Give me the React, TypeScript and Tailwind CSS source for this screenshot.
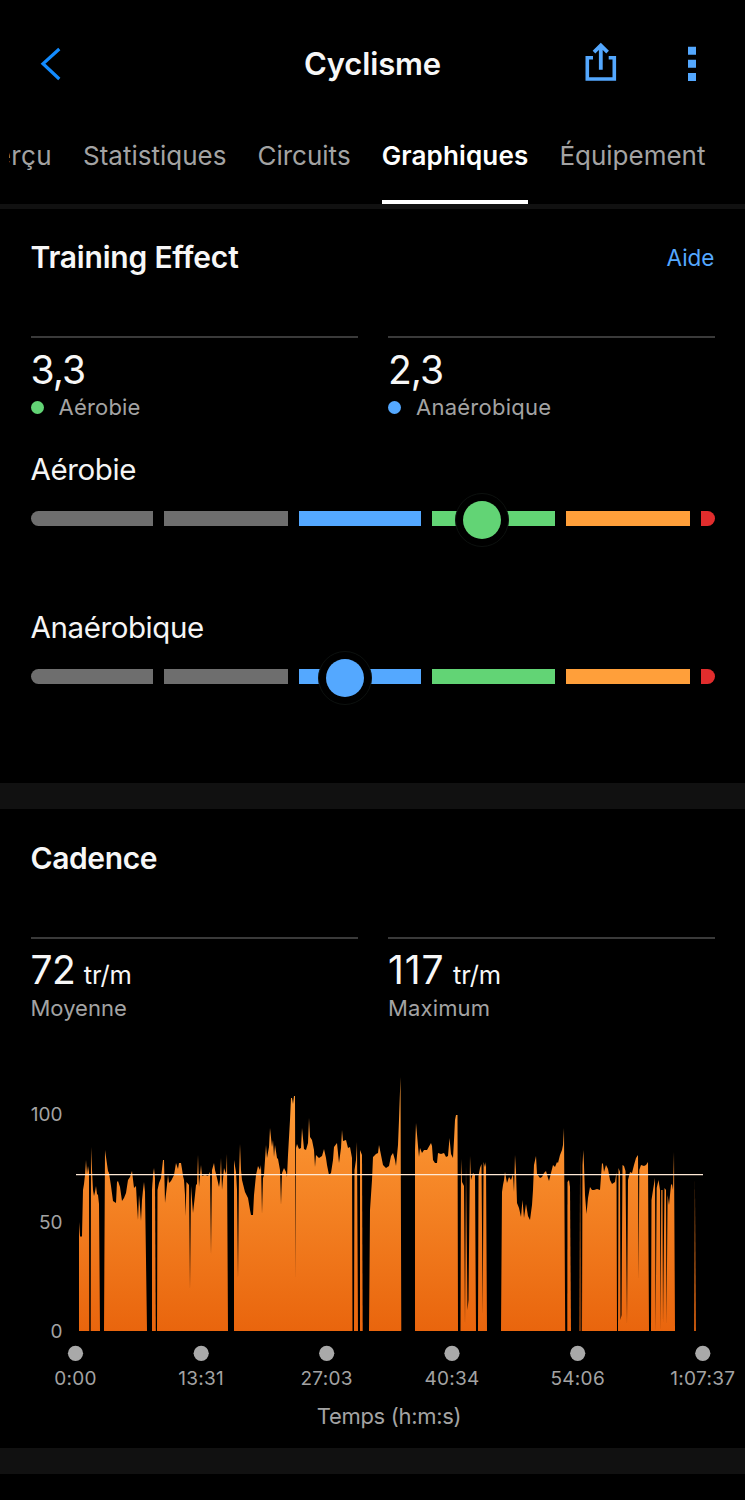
import React from "react";

const CADENCE = [
  "79,1331 79,1222 80,1236 81,1237 82,1236 83,1190 84,1184 85,1175 86,1160 87,1174 88,1166 89,1172 89.3,1331",
  "90.7,1331 91,1147 92,1170 93,1190 94,1196 95,1192 96,1186 97,1194 98,1195 99,1204 100,1331",
  "104,1331 105,1150 106,1157 108,1171 109,1173 111,1186 113,1201 116,1203 117,1182 118,1181 120,1187 122,1201 124,1198 126,1193 128,1180 130,1177 132,1171 134,1188 136,1186 137,1205 138,1220 139,1195 140,1207 141,1221 142,1200 143,1190 144,1182 145,1192 146,1260 147,1331",
  "152,1331 152,1190 153,1175 154,1168 155,1178 155.8,1331",
  "157,1331 157.5,1190 159,1183 161,1178 163,1160 164,1160 165,1203 167,1185 168,1175 169,1183 171,1181 174,1175 176,1163 178,1169 179,1163 181,1163 182,1169 183,1176 184,1180 185,1195 185.6,1216 186.5,1182 189,1185 190,1290 191,1186 193,1213 195,1195 196,1185 197,1184 198,1155 199,1187 201,1165 202,1176 205,1175 208,1176 210,1172 211,1255 212,1170 214,1163 215,1170 217,1178 219,1187 220,1180 221,1158 222,1190 224,1168 226,1174 227,1154 228,1331",
  "234,1331 234,1160 236,1172 237,1190 238,1279 239,1175 240,1144 241,1170 242,1180 245,1192 248,1198 250,1210 251,1215 253,1215 254,1195 256,1175 258,1166 260,1170 261,1165 262,1214 263,1178 264,1175 266,1145 267,1158 269,1147 270,1128 272,1147 273,1140 274,1157 275,1145 277,1158 278,1159 280,1170 281,1205 282,1173 284,1168 286,1172 287,1177 288,1155 290,1120 291,1098 292,1098 293,1104 294,1096 295,1096 295.5,1280 296,1148 297,1144 299,1149 301,1148 302,1128 304,1149 306,1150 308,1143 309,1118 310,1137 312,1140 314,1150 315,1167 316,1155 319,1158 322,1156 324,1149 326,1158 327,1165 329,1175 331,1173 333,1160 334,1147 337,1143 339,1163 341,1148 342,1130 343,1141 346,1140 348,1148 350,1147 352,1158 352.5,1331",
  "354,1331 354.5,1170 356,1160 357,1142 358,1331",
  "360,1331 360,1150 362,1155 362.7,1331",
  "369,1331 370,1210 372,1180 373,1157 376,1154 378,1153 379,1145 381,1155 383,1165 386,1168 389,1166 391,1156 393,1153 395,1160 396,1166 398,1145 399,1120 400.5,1077 401.3,1331",
  "415,1331 415,1150 416,1123 418,1146 419,1157 420,1148 422,1153 424,1150 427,1150 431,1143 432,1146 433,1160 435,1163 437,1163 438,1153 441,1154 444,1153 446,1157 448,1156 449.5,1138 451,1154 453,1158 454,1140 455,1120 456,1115 457.5,1115 458,1331",
  "460.5,1331 461,1159 462,1182 464,1186 465,1325 466,1166 467.5,1310 468.5,1300 470,1156 471,1180 473,1173 475,1175 476,1331",
  "478,1331 478.5,1176 480,1168 481.5,1164 482.7,1315 483.6,1162 485,1167 486,1162 487,1331",
  "501,1331 502,1192 503,1185 504,1180 505,1172 507,1183 509,1177 511,1180 513,1174 514,1192 515,1155 516,1172 517,1203 519,1208 521,1217 522.5,1200 524,1218 526,1204 528,1216 530,1220 532,1205 533,1190 534,1165 536,1156 537,1174 540,1178 542,1177 544,1173 546,1171 548,1178 549,1181 551,1173 553,1165 555,1167 557,1162 558,1163 560,1155 562,1150 563,1145 564,1128 565.2,1331",
  "567.3,1331 567.5,1182 569,1180 570,1187 571,1331",
  "582,1331 582.5,1165 583.3,1150 584,1165 585,1195 586.5,1214 588,1198 590,1187 592,1190 594,1190 597,1189 600,1190 602,1163 603,1164 604,1172 606,1165 608,1169 610,1180 612,1184 615,1182 616.5,1172 617,1331",
  "618,1331 618.5,1168 620,1172 620.5,1320 621.5,1315 622.5,1165 624,1166 625.5,1171 627,1325 628,1180 630,1172 632,1173 634,1165 636,1158 638,1155 638.6,1280 639.3,1170 641,1165 644,1166 646,1165 648,1162 649,1331",
  "651,1331 651.5,1200 653,1190 655,1178 655.6,1331 656.7,1188 658.5,1180 660,1190 660.5,1331 661.3,1190 662.5,1190 663,1325 664.5,1188 666,1190 666.5,1325 667.6,1195 669,1205 671,1185 672,1184 673,1190 674,1152 675,1331",
];

const TIMES = [
  { x: 75.5, label: "0:00" },
  { x: 201.2, label: "13:31" },
  { x: 326.7, label: "27:03" },
  { x: 452, label: "40:34" },
  { x: 577.7, label: "54:06" },
  { x: 702.8, label: "1:07:37" },
];

function CadenceChart() {
  return (
    <svg className="block h-[390px] w-[745px]" viewBox="0 1050 745 390">
      <defs>
        <linearGradient id="cadence" gradientUnits="userSpaceOnUse" x1="0" y1="1077" x2="0" y2="1331">
          <stop offset="0" stopColor="#ff9f3a" />
          <stop offset="0.4" stopColor="#f68828" />
          <stop offset="1" stopColor="#e9650d" />
        </linearGradient>
      </defs>
      <g fill="url(#cadence)">
        {CADENCE.map((points) => (
          <polygon key={points} points={points} />
        ))}
        <polygon points="579,1331 580.2,1150 581.5,1331" opacity="0.5" />
        <polygon points="694,1331 694.9,1180 696,1331" opacity="0.85" />
      </g>
      <path d="M76 1174.7H703" stroke="#ffe9d5" strokeWidth="1.3" />
      <g fill="#a3a3a3" fontSize="19">
        <text x="62.5" y="1120.5" textAnchor="end">100</text>
        <text x="62.5" y="1228.5" textAnchor="end">50</text>
        <text x="62.5" y="1337.5" textAnchor="end">0</text>
        {TIMES.map((t) => (
          <g key={t.label}>
            <circle cx={t.x} cy="1353.3" r="7.6" fill="#a9a9a9" />
            <text x={t.x} y="1384.5" textAnchor="middle" letterSpacing="0.3">{t.label}</text>
          </g>
        ))}
        <text x="389" y="1424" textAnchor="middle" fontSize="22" letterSpacing="-0.3">Temps (h:m:s)</text>
      </g>
    </svg>
  );
}

function Gauge({ label, dot, knob }: { label: string; dot: string; knob: string }) {
  return (
    <div className="h-[158px]">
      <div className="h-[61px] text-[29.5px] leading-[38px] tracking-[-0.4px] text-[#f5f5f5]">{label}</div>
      <div className="relative flex h-[15px] gap-[11px]">
        <div className="w-[123px] rounded-l-full bg-[#6e6e6e]" />
        <div className="w-[123.5px] bg-[#6e6e6e]" />
        <div className="w-[123px] bg-[#54a8ff]" />
        <div className="w-[123px] bg-[#62d475]" />
        <div className="w-[123.5px] bg-[#ff9f3a]" />
        <div className="w-[14px] rounded-r-full bg-[#e12d2d]" />
        <div className={`absolute top-[-18px] flex size-[54px] items-center justify-center rounded-full border border-[#0d110f] bg-black ${knob}`}>
          <div className={`size-[38px] rounded-full ${dot}`} />
        </div>
      </div>
    </div>
  );
}

export default function App() {
  return (
    <div className="h-[1500px] w-[745px] overflow-hidden bg-black font-['Inter',sans-serif] text-[#f7f7f7]">
      <header className="flex h-[128px] items-center">
        <svg className="h-[40px] w-[75px]" viewBox="0 44 75 40" fill="none">
          <path d="M59.3 49L43 63.7L59.3 79" stroke="#138cff" strokeWidth="3.2" />
        </svg>
        <h1 className="w-[595px] text-center text-[31px] leading-[40px] font-semibold tracking-[-0.15px]">Cyclisme</h1>
        <svg className="-ml-[100px] h-[44px] w-[175px]" viewBox="570 42 175 44" fill="none">
          <path d="M593 57.7H587.3V79H614.3V57.7H608.7" stroke="#54a8ff" strokeWidth="3.6" />
          <path d="M600.8 69.7V47M594 52.2L600.8 45.5L607.6 52.2" stroke="#54a8ff" strokeWidth="3.8" />
          <path d="M688 46.7h8v8h-8zM688 59.8h8v8h-8zM688 73h8v8h-8z" fill="#54a8ff" />
        </svg>
      </header>

      <nav className="ml-[9px] flex h-[76px] justify-between overflow-hidden pr-[39.5px] text-[26px] leading-[56px] text-[#a3a3a3]">
        <div className="flex w-[43px] shrink-0 justify-end overflow-hidden tracking-[0.4px]">Aperçu</div>
        <div>Statistiques</div>
        <div>Circuits</div>
        <div className="border-b-4 border-white font-semibold tracking-[0.15px] text-white">Graphiques</div>
        <div>Équipement</div>
      </nav>
      <div className="h-[5px] bg-[#111111]" />

      <section className="h-[574px] pr-[30.5px] pl-[30.5px]">
        <div className="flex h-[127px] items-start justify-between pt-[28px]">
          <h2 className="text-[30px] leading-[40px] font-semibold tracking-[-0.2px]">Training Effect</h2>
          <a className="pt-px text-[22.5px] leading-[40px] text-[#54a8ff]">Aide</a>
        </div>
        <div className="flex gap-[30px]">
          <div className="h-[105px] w-[328px] border-t-2 border-[#3a3a3a]">
            <div className="pt-[10px] text-[39px] leading-[44px] tracking-[-1px]">3,3</div>
            <div className="flex items-center gap-[15px] text-[22px] leading-[30px] tracking-[0.2px] text-[#a3a3a3]"><span className="size-[13px] rounded-full bg-[#62d475]" />Aérobie</div>
          </div>
          <div className="h-[105px] w-[327px] border-t-2 border-[#3a3a3a]">
            <div className="pt-[10px] text-[39px] leading-[44px] tracking-[-1px]">2,3</div>
            <div className="flex items-center gap-[15px] text-[22px] leading-[30px] tracking-[0.25px] text-[#a3a3a3]"><span className="size-[13px] rounded-full bg-[#54a8ff]" />Anaérobique</div>
          </div>
        </div>
        <div className="pt-[9px]">
          <Gauge label="Aérobie" dot="bg-[#62d475]" knob="left-[424.5px]" />
          <Gauge label="Anaérobique" dot="bg-[#54a8ff]" knob="left-[287.5px]" />
        </div>
      </section>

      <div className="h-[26px] bg-[#111111]" />

      <section className="h-[639px]">
        <div className="h-[128px] px-[30.5px] pt-[29px]">
          <h2 className="text-[30px] leading-[40px] font-semibold tracking-[-0.4px]">Cadence</h2>
        </div>
        <div className="flex h-[113px] gap-[30px] px-[30.5px]">
          <div className="w-[328px] border-t-2 border-[#3a3a3a]">
            <div className="flex h-[54px] items-baseline gap-[8.5px] pt-[9px] text-[39px] leading-[44px]"><span className="tracking-[-0.5px]">72</span><span className="text-[25.5px] tracking-[-0.2px]">tr/m</span></div>
            <div className="text-[22px] leading-[30px] text-[#a3a3a3]">Moyenne</div>
          </div>
          <div className="w-[327px] border-t-2 border-[#3a3a3a]">
            <div className="flex h-[54px] items-baseline gap-[8.5px] pt-[9px] text-[39px] leading-[44px]"><span className="tracking-[0.9px]">117</span><span className="text-[25.5px] tracking-[-0.2px]">tr/m</span></div>
            <div className="text-[22px] leading-[30px] tracking-[0.15px] text-[#a3a3a3]">Maximum</div>
          </div>
        </div>
        <CadenceChart />
      </section>
      <div className="h-[26px] bg-[#111111]" />
    </div>
  );
}
